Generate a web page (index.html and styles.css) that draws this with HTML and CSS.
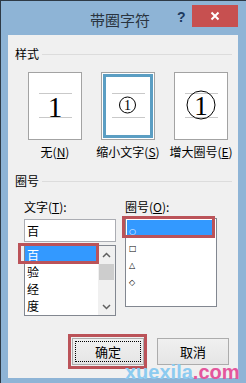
FILE: index.html
```html
<!DOCTYPE html>
<html lang="zh-CN">
<head>
  <meta charset="UTF-8">
  <meta name="viewport" content="width=device-width, initial-scale=1">
  <title>带圈字符</title>
  <link rel="stylesheet" href="styles.css">
</head>
<body>

<div class="window">
  <!-- Title bar -->
  <div class="titlebar">
    <div class="title">带圈字符</div>
    <div class="help">?</div>
    <div class="close">
      <svg width="10" height="10" viewBox="0 0 10 10"><path d="M1.5 1.5 L8.5 8.5 M8.5 1.5 L1.5 8.5" stroke="#fff" stroke-width="2"/></svg>
    </div>
  </div>

  <div class="content">
    <!-- 样式 -->
    <div class="group-head"><span>样式</span><div class="rule"></div></div>
    <div class="styles">
      <div class="style-opt">
        <div class="preview">
          <svg width="52" height="66" viewBox="0 0 52 66">
            <path d="M10 20.5 H43 M10 44.5 H43" stroke="#c9c9c9"/>
            <text x="26" y="44" text-anchor="middle" class="digit" font-size="29">1</text>
          </svg>
        </div>
        <div class="opt-label">无(<u>N</u>)</div>
      </div>
      <div class="style-opt">
        <div class="preview selected">
          <svg width="52" height="66" viewBox="0 0 52 66">
            <path d="M10 20.5 H43 M10 44.5 H43" stroke="#c9c9c9"/>
            <circle cx="25.5" cy="32" r="8" fill="none" stroke="#000"/>
            <text x="25.5" y="37" text-anchor="middle" class="digit" font-size="14">1</text>
          </svg>
        </div>
        <div class="opt-label">缩小文字(<u>S</u>)</div>
      </div>
      <div class="style-opt">
        <div class="preview">
          <svg width="52" height="66" viewBox="0 0 52 66">
            <path d="M10 20.5 H43 M10 44.5 H43" stroke="#c9c9c9"/>
            <circle cx="26" cy="32" r="14" fill="none" stroke="#000"/>
            <text x="26" y="41.5" text-anchor="middle" class="digit" font-size="27">1</text>
          </svg>
        </div>
        <div class="opt-label">增大圈号(<u>E</u>)</div>
      </div>
    </div>

    <!-- 圈号 -->
    <div class="group-head second"><span>圈号</span><div class="rule"></div></div>
    <div class="columns">
      <div class="col">
        <div class="field-label">文字(<u>T</u>):</div>
        <div class="text-box">百</div>
        <div class="listbox left-list">
          <div class="items">
            <div class="item selected">百<span class="mark row-mark"></span></div>
            <div class="item">验</div>
            <div class="item">经</div>
            <div class="item">度</div>
          </div>
          <div class="scrollbar">
            <div class="arrow">
              <svg width="9" height="6" viewBox="0 0 9 6"><path d="M1 5 L4.5 1.5 L8 5" fill="none" stroke="#606060" stroke-width="1.5"/></svg>
            </div>
            <div class="thumb"></div>
            <div class="track"></div>
            <div class="arrow">
              <svg width="9" height="6" viewBox="0 0 9 6"><path d="M1 1 L4.5 4.5 L8 1" fill="none" stroke="#606060" stroke-width="1.5"/></svg>
            </div>
          </div>
        </div>
      </div>
      <div class="col">
        <div class="field-label">圈号(<u>O</u>):</div>
        <div class="listbox right-list">
          <div class="item selected"><span class="sym">○</span><span class="mark sym-mark"></span></div>
          <div class="item"><span class="sym">□</span></div>
          <div class="item"><span class="sym">△</span></div>
          <div class="item"><span class="sym">◇</span></div>
        </div>
      </div>
    </div>

    <!-- Buttons -->
    <div class="buttons">
      <div class="btn default">确定<span class="focus"></span><span class="mark btn-mark"></span></div>
      <div class="btn">取消</div>
    </div>
  </div>

  <div class="watermark"><span class="wm-a">xuexila</span><span class="wm-b">.com</span></div>
</div>

</body>
</html>
```

FILE: styles.css
```css
body {
  margin: 0;
  font-family: "Noto Sans CJK SC", "Noto Sans", sans-serif;
  font-size: 12px;
  color: #000;
}
.window {
  position: relative;
  width: 246px;
  height: 383px;
  box-sizing: border-box;
  background-color: #8eb4d6;
  border-top: 1px solid #2e3a46;
  border-left: 1px solid #2e3a46;
  padding: 0 8px 5px 7px;
  display: flex;
  flex-direction: column;
}
.titlebar {
  height: 34px;
  display: flex;
  align-items: flex-start;
}
.title {
  margin: 10px 0 0 82px;
  font-size: 15px;
  line-height: 18px;
  color: #2a3440;
}
.help {
  margin: 8px 0 0 27px;
  font-family: "Liberation Sans", sans-serif;
  font-weight: bold;
  font-size: 14px;
  line-height: 16px;
  color: #1c3a60;
}
.close {
  margin: 4px 0 0 auto;
  width: 46px;
  height: 22px;
  background-color: #c75050;
  display: flex;
  align-items: center;
  justify-content: center;
}
.content {
  flex: 1;
  background-color: #f0f0f0;
  padding: 0 6px 0 7px;
}
.group-head {
  margin-top: 12px;
  height: 14px;
  display: flex;
  align-items: center;
  gap: 3px;
  line-height: 14px;
}
.group-head.second {
  margin-top: 15px;
}
.rule {
  flex: 1;
  height: 1px;
  background-color: #dcdcdc;
}
.styles {
  display: flex;
  gap: 19px;
  margin: 11px 0 0 13px;
}
.style-opt {
  width: 54px;
  display: flex;
  flex-direction: column;
  align-items: center;
}
.preview {
  width: 54px;
  height: 68px;
  box-sizing: border-box;
  border: 1px solid #a3a3a3;
  background-color: #fff;
}
.preview svg {
  display: block;
}
.preview.selected {
  box-shadow: inset 0 0 0 1px #fff, inset 0 0 0 4px #5b9ec3;
}
.digit {
  font-family: "Liberation Serif", serif;
}
.opt-label {
  margin-top: 5px;
  line-height: 14px;
  white-space: nowrap;
}
.columns {
  display: flex;
  gap: 9px;
  margin: 12px 0 0 9px;
}
.col {
  width: 92px;
}
.field-label {
  line-height: 14px;
}
.text-box {
  margin-top: 5px;
  height: 23px;
  box-sizing: border-box;
  border: 1px solid #abadb3;
  background-color: #fff;
  padding-left: 2px;
  line-height: 21px;
}
.listbox {
  position: relative;
  box-sizing: border-box;
  border: 1px solid #828790;
  background-color: #fff;
}
.left-list {
  margin-top: 3px;
  height: 71px;
  display: flex;
}
.items {
  flex: 1;
}
.item {
  position: relative;
  height: 17px;
  line-height: 17px;
  padding-left: 2px;
}
.item.selected {
  background-color: #3399ff;
  color: #fff;
}
.scrollbar {
  width: 17px;
  background-color: #f0f0f0;
  display: flex;
  flex-direction: column;
}
.arrow {
  height: 17px;
  display: flex;
  align-items: center;
  justify-content: center;
}
.thumb {
  height: 16px;
  margin: 1px 1px 0;
  background-color: #cdcdcd;
}
.track {
  flex: 1;
}
.right-list {
  margin-top: 4px;
  height: 89px;
  padding-top: 1px;
}
.right-list .item {
  margin: 0 1px;
}
.sym {
  font-family: "DejaVu Sans", sans-serif;
  font-size: 8px;
}
.mark {
  position: absolute;
  border: 3px solid #bb5359;
  pointer-events: none;
}
.row-mark {
  left: -7px;
  right: -1px;
  top: -3px;
  bottom: -1px;
}
.sym-mark {
  left: -5px;
  right: 0;
  top: -4px;
  bottom: -1px;
}
.buttons {
  display: flex;
  justify-content: flex-end;
  gap: 13px;
  margin: 22px 3px 0 0;
}
.btn {
  position: relative;
  width: 72px;
  height: 27px;
  box-sizing: border-box;
  border: 1px solid #acacac;
  background: linear-gradient(#f0f0f0, #e5e5e5);
  display: flex;
  align-items: center;
  justify-content: center;
  font-size: 13px;
}
.focus {
  position: absolute;
  inset: 2px;
  border: 1px dotted #000;
}
.btn-mark {
  inset: -5px -4px -5px -5px;
}
.watermark {
  position: absolute;
  left: 124px;
  top: 361px;
  font-family: "Liberation Sans", sans-serif;
  font-weight: bold;
  font-size: 20px;
  line-height: 20px;
  white-space: nowrap;
}
.wm-a {
  color: #8ccbf0;
}
.wm-b {
  color: #e4579d;
}
```
